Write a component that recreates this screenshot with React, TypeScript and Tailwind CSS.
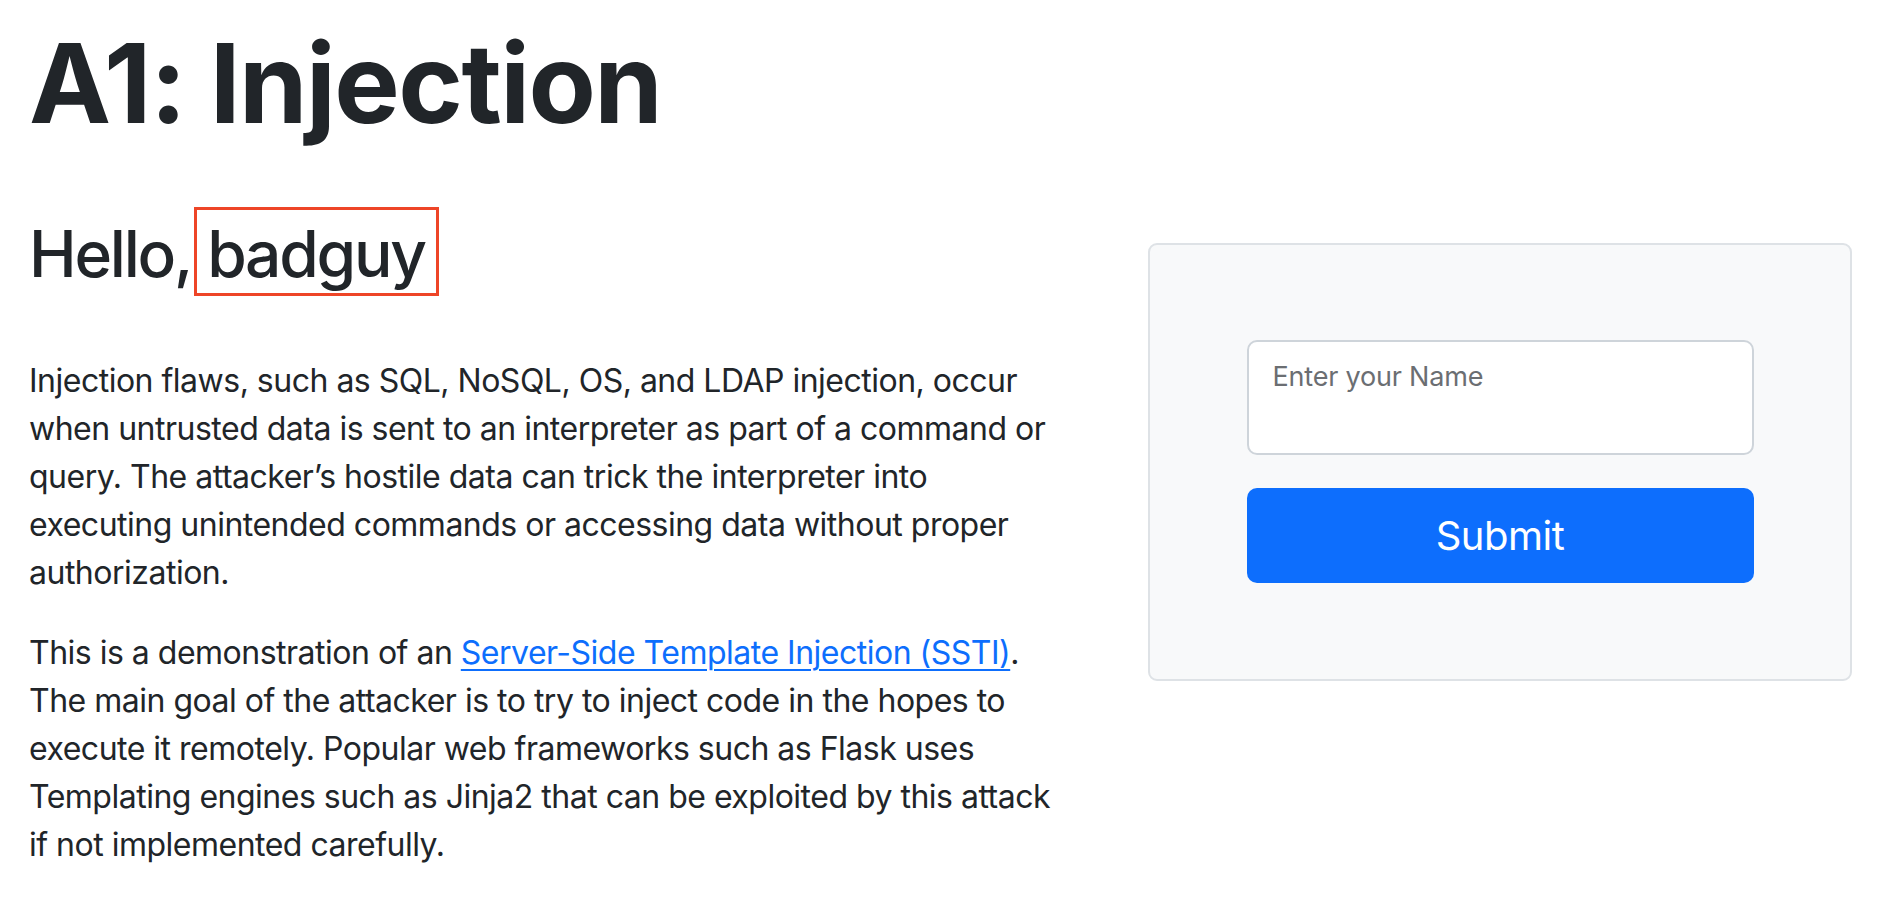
import React from 'react';

const App: React.FC = () => {
  return (
    <div className="min-h-screen w-full bg-white text-[#212529] font-['Inter','Liberation_Sans',sans-serif]">
      <div className="pt-[17px] pl-[29px] pr-[30px]">
        {/* Page title */}
        <h1 className="text-[110px] font-bold leading-[1.2] tracking-[-0.014em]">A1: Injection</h1>

        <div className="flex items-start justify-between">
          {/* Left: greeting + description */}
          <div className="w-[1060px]">
            <h2 className="mt-[67px] text-[64px] font-medium leading-[1.2] tracking-[-0.035em]">
              Hello,
              <span className="ml-[3px] border-[3px] border-[#ee4527] pt-[5px] pb-[1px] pl-[10px] pr-[11px]">badguy</span>
            </h2>

            <p className="mt-[64px] text-[32px] leading-[48px] tracking-[-0.5px]">
              Injection flaws, such as SQL, NoSQL, OS, and LDAP injection, occur
              <br />
              when untrusted data is sent to an interpreter as part of a command or
              <br />
              query. The attacker’s hostile data can trick the interpreter into
              <br />
              executing unintended commands or accessing data without proper
              <br />
              authorization.
            </p>

            <p className="mt-[32px] text-[32px] leading-[48px] tracking-[-0.5px]">
              This is a demonstration of an{' '}
              <a href="#" className="text-[#0d6efd] underline decoration-2 underline-offset-[5px]">
                Server-Side Template Injection (SSTI)
              </a>
              .
              <br />
              The main goal of the attacker is to try to inject code in the hopes to
              <br />
              execute it remotely. Popular web frameworks such as Flask uses
              <br />
              Templating engines such as Jinja2 that can be exploited by this attack
              <br />
              if not implemented carefully.
            </p>
          </div>

          {/* Right: form card */}
          <div className="mt-[94px] w-[704px] rounded-[9px] border-2 border-[#dee2e6] bg-[#f8f9fa] pt-[95px] pb-[96px]">
            <form className="mx-auto flex w-[507px] flex-col gap-[33px]" onSubmit={(e) => e.preventDefault()}>
              <input
                type="text"
                placeholder="Enter your Name"
                className="h-[115px] w-full rounded-[10px] border-2 border-[#ced4da] bg-white pl-[24px] pr-[24px] pt-[18px] pb-[61px] text-[27px] leading-[32px] tracking-[-0.2px] outline-none placeholder:text-[#6b6e72]"
              />
              <button
                type="submit"
                className="flex h-[95px] w-full items-center justify-center rounded-[10px] bg-[#0d6efd] text-[40px] leading-[1.2] tracking-[-0.5px] text-white"
              >
                Submit
              </button>
            </form>
          </div>
        </div>
      </div>
    </div>
  );
};

export default App;
